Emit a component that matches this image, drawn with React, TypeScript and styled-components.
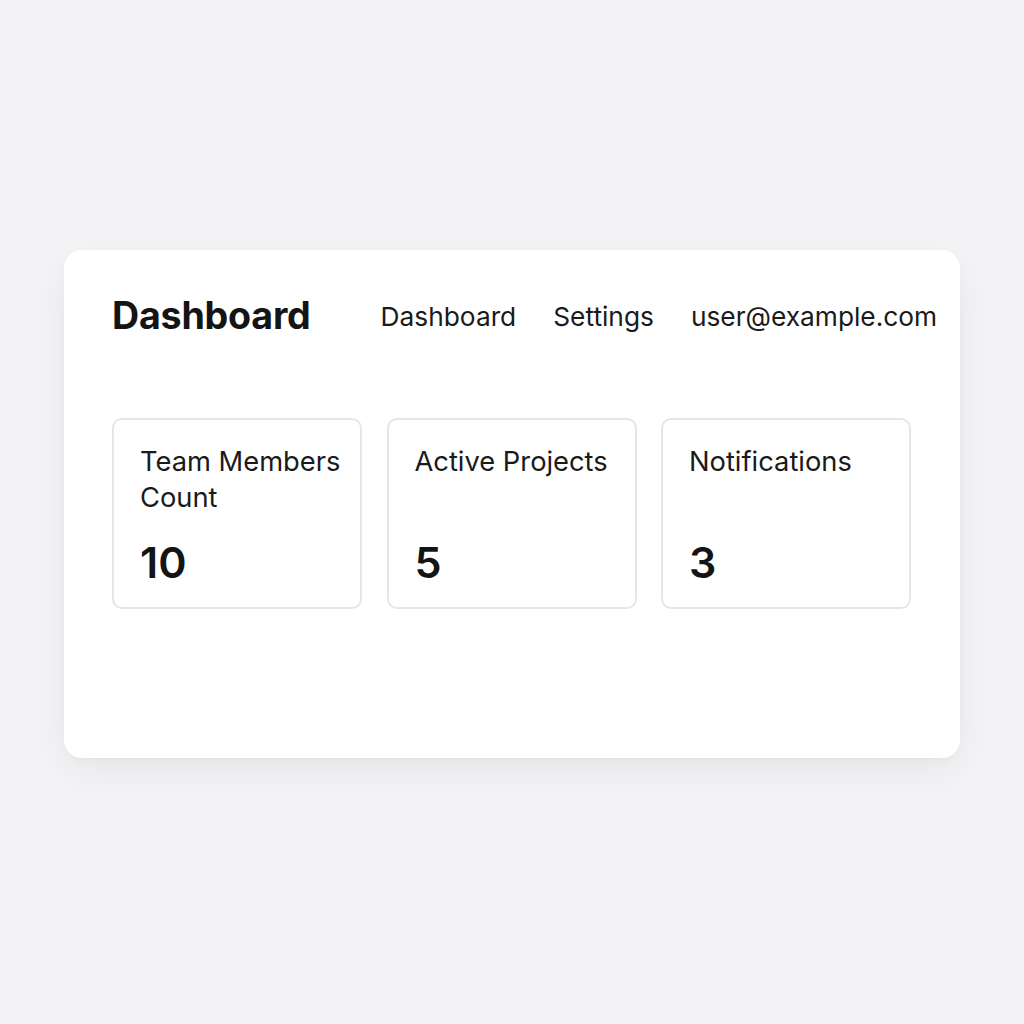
import React from "react";
import styled, { createGlobalStyle } from "styled-components";

const GlobalStyle = createGlobalStyle`
  html, body {
    margin: 0;
    padding: 0;
    background-color: #f4f4f6;
    font-family: Inter, "Noto Sans", "Liberation Sans", sans-serif;
    color: #141414;
  }
`;

interface Stat {
  label: string;
  value: number;
}

const stats: Stat[] = [
  { label: "Team Members Count", value: 10 },
  { label: "Active Projects", value: 5 },
  { label: "Notifications", value: 3 },
];

const App: React.FC = (): JSX.Element => {
  return (
    <Page>
      <GlobalStyle />
      <Panel>
        <Header>
          <Title>Dashboard</Title>
          <Nav>
            <NavLink>Dashboard</NavLink>
            <NavLink>Settings</NavLink>
            <NavLink>user@example.com</NavLink>
          </Nav>
        </Header>
        <StatGrid>
          {stats.map((stat) => (
            <StatCard key={stat.label}>
              <StatLabel>{stat.label}</StatLabel>
              <StatValue>{stat.value}</StatValue>
            </StatCard>
          ))}
        </StatGrid>
      </Panel>
    </Page>
  );
};

const Page = styled.div`
  min-height: 100vh;
  box-sizing: border-box;
  padding: 250px 64px;
`;

const Panel = styled.div`
  box-sizing: border-box;
  width: 896px;
  height: 508px;
  background-color: #ffffff;
  border-radius: 18px;
  box-shadow: 0 14px 40px rgba(0, 0, 0, 0.06), 0 2px 6px rgba(0, 0, 0, 0.03);
  padding: 42px 20px 0 48px;
`;

const Header = styled.div`
  display: flex;
  align-items: center;
  gap: 70px;
`;

const Title = styled.h1`
  margin: 0;
  font-size: 37.6px;
  font-weight: 700;
  line-height: 48px;
  letter-spacing: -0.2px;
`;

const Nav = styled.nav`
  display: flex;
  gap: 37px;
`;

const NavLink = styled.span`
  font-size: 26.3px;
  font-weight: 400;
  color: #1a1a1a;
`;

const StatGrid = styled.div`
  display: grid;
  grid-template-columns: repeat(3, 250px);
  gap: 24.5px;
  margin-top: 78px;
`;

const StatCard = styled.div`
  box-sizing: border-box;
  height: 191px;
  display: flex;
  flex-direction: column;
  justify-content: space-between;
  border: 2px solid #e6e6e8;
  border-radius: 10px;
  padding: 24px 14px 19px 26px;
`;

const StatLabel = styled.div`
  font-size: 27.3px;
  line-height: 36px;
  color: #1a1a1a;
`;

const StatValue = styled.div`
  font-size: 43px;
  font-weight: 600;
  line-height: 52px;
`;

export default App;
